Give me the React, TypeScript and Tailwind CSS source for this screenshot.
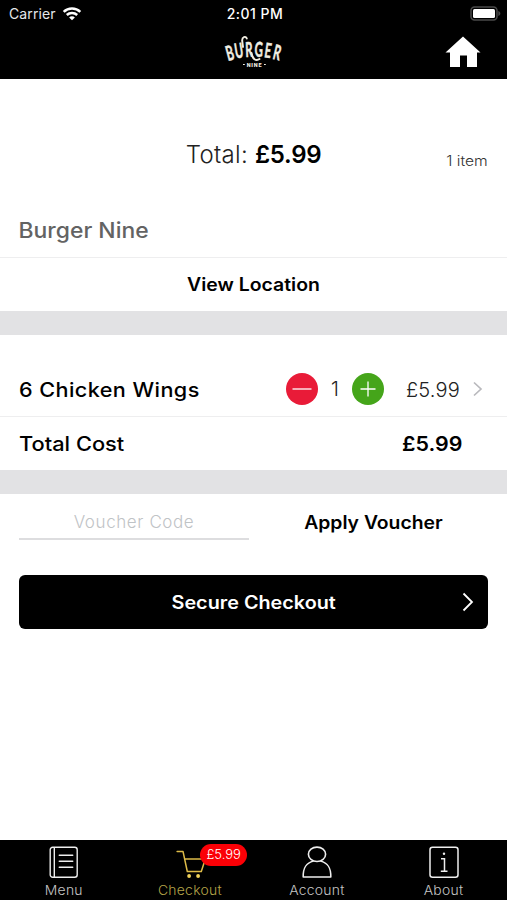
import React from 'react';
import clsx from 'clsx';

const ITEM = { name: '6 Chicken Wings', quantity: 1, price: '£5.99' };

const LOGO_LETTERS = [
    { char: 'B', x: 231.6, y: 61, angle: -15 },
    { char: 'U', x: 240, y: 58.8, angle: -9 },
    { char: 'R', x: 249.3, y: 57.8, angle: -2 },
    { char: 'G', x: 258.5, y: 57.8, angle: 3 },
    { char: 'E', x: 267, y: 58.8, angle: 8 },
    { char: 'R', x: 275.6, y: 60.5, angle: 13 },
];

const WifiIcon = () => (
    <svg width="20" height="16" viewBox="0 0 20 16" fill="none" stroke="#fff" strokeWidth="2.5">
        <path d="M1.7 5.8C6.3 1.3 13.7 1.3 18.3 5.8" />
        <path d="M4.8 9C7.7 6.2 12.3 6.2 15.2 9" />
        <path d="M7.1 11.4C8.7 9.9 11.3 9.9 12.9 11.4L10 14.3Z" fill="#fff" stroke="none" />
    </svg>
);

const BatteryIcon = () => (
    <svg width="31" height="15" viewBox="0 0 31 15">
        <rect x="1" y="1" width="26" height="13" rx="3.5" fill="#000" stroke="#4a4a4a" strokeWidth="1.5" />
        <rect x="3" y="3" width="22" height="9" rx="1.5" fill="#fff" />
        <path d="M28.3 5v5c1.6-.7 2-1.5 2-2.5s-.4-1.8-2-2.5Z" fill="#4a4a4a" />
    </svg>
);

const BurgerLogo = () => (
    <svg width="62" height="36" viewBox="223 35 62 36" fill="#f1eee2">
        {LOGO_LETTERS.map((letter, index) => (
            <text
                key={index}
                transform={`translate(${letter.x} ${letter.y}) rotate(${letter.angle}) scale(0.56 1)`}
                textAnchor="middle"
                stroke="#f1eee2"
                strokeWidth="0.5"
                className="font-['Lato'] text-[20.5px] font-bold"
            >
                {letter.char}
            </text>
        ))}
        {/* Swashes over the U and under the first R */}
        <path
            d="M243 48L242.2 42C241.8 37.5 245.8 36.8 246.8 39.5M251.5 54C252.3 60 256 62.4 259.5 60"
            fill="none"
            stroke="#f1eee2"
            strokeWidth="1.9"
            strokeLinecap="round"
        />
        <text x="254.5" y="67.6" textAnchor="middle" className="font-['Roboto'] text-[5.5px] font-black tracking-[0.8px]">
            NINE
        </text>
        <path d="M243 65.5h1.8M264 65.5h1.8" stroke="#f1eee2" strokeWidth="1" />
    </svg>
);

const HomeIcon = () => (
    <svg width="36" height="32" viewBox="0 0 36 32" fill="#fff">
        <path d="M18 .5L35.5 16.5H32V31H22V19.5H15V31H5V16.5H.5Z" />
    </svg>
);

const MenuIcon = () => (
    <svg width="30" height="33" viewBox="-1 0 30 33" fill="none" stroke="#eee" strokeWidth="1.4">
        <rect x="1.2" y="1.2" width="27" height="30" rx="2.5" />
        <path d="M5.3 1.2v30" />
        <path d="M10.3 9.2h13.4M10.3 15.2h13.4M10.3 21.3h13.4" strokeWidth="1.5" strokeLinecap="round" />
    </svg>
);

const CartIcon = () => (
    <svg width="30" height="33" viewBox="-0.8 0 30 33" fill="none" stroke="#ddbb48" strokeWidth="1.5">
        <path d="M1.3 5.4H7.2L11.5 25.5H25.5L29.5 13H8.8" strokeLinejoin="round" strokeLinecap="round" />
        <circle cx="13.3" cy="30" r="1.9" fill="#f0d158" stroke="none" />
        <circle cx="22.3" cy="30" r="1.9" fill="#f0d158" stroke="none" />
    </svg>
);

const AccountIcon = () => (
    <svg width="30" height="33" viewBox="0 0 30 33" fill="none" stroke="#eee" strokeWidth="1.6">
        <ellipse cx="15" cy="8.3" rx="8.6" ry="7.2" />
        <path d="M11.5 15C4 17 1 21.5 1.2 31H28.8C29 21.5 26 17 18.5 15" strokeLinejoin="round" />
    </svg>
);

const AboutIcon = () => (
    <svg width="30" height="33" viewBox="0 0 30 33" fill="none" stroke="#eee" strokeWidth="1.5">
        <rect x="1" y="1.2" width="28" height="30" rx="2.5" />
        <path d="M12 12.7H15.5V25.3M11.8 25.3H18.5" strokeWidth="1.5" />
        <circle cx="15" cy="7.7" r="1.2" fill="#eee" stroke="none" />
    </svg>
);

const TABS = [
    { label: 'Menu', icon: <MenuIcon /> },
    { label: 'Checkout', icon: <CartIcon />, badge: '£5.99', active: true },
    { label: 'Account', icon: <AccountIcon /> },
    { label: 'About', icon: <AboutIcon /> },
];

const Header = () => (
    <header className="h-[79px] shrink-0 bg-black text-white">
        <div className="grid h-[27px] grid-cols-3 items-center pl-[9px] pr-[6px]">
            <div className="flex items-center gap-[6px]">
                <span className="text-[14px] tracking-[0.1px] text-gray-200">Carrier</span>
                <WifiIcon />
            </div>
            <span className="text-center text-[14px] font-medium tracking-[0.5px]">2:01 PM</span>
            <div className="flex justify-end">
                <BatteryIcon />
            </div>
        </div>
        <div className="grid grid-cols-3 items-center pl-[27px] pr-[26px] pt-[7px]">
            <span />
            <div className="flex justify-center">
                <BurgerLogo />
            </div>
            <button className="flex justify-end" aria-label="Home">
                <HomeIcon />
            </button>
        </div>
    </header>
);

const Divider = () => <div className="h-[24px] shrink-0 bg-[#e2e2e4]" />;

const TabBar = () => (
    <nav className="grid h-[60px] shrink-0 grid-cols-4 bg-black">
        {TABS.map((tab) => (
            <button key={tab.label} className="flex flex-col items-center pt-[6px]">
                <span className="relative">
                    {tab.icon}
                    {tab.badge && (
                        <span className="absolute left-[25px] top-[-2px] flex h-[22px] w-[47px] items-center justify-center rounded-full bg-[#fb0006] text-[13px] font-light text-white">
                            {tab.badge}
                        </span>
                    )}
                </span>
                <span
                    className={clsx(
                        'mt-[2px] scale-x-[1.07] text-[13px] font-light leading-[18px] tracking-[0.25px]',
                        tab.active ? 'text-[#b5a448]' : 'text-[#c4c4c4]'
                    )}
                >
                    {tab.label}
                </span>
            </button>
        ))}
    </nav>
);

export default function App() {
    return (
        <div className="flex h-[900px] w-[507px] flex-col overflow-hidden bg-white font-['Inter','Liberation_Sans',sans-serif] text-black">
            <Header />

            <main className="flex flex-1 flex-col">
                <section className="grid h-[125px] grid-cols-[1fr_auto_1fr] items-center px-[19px] pt-[27px]">
                    <span />
                    <h1 className="text-[24px] font-light">
                        <span className="tracking-[0.3px] text-[#222]">Total: </span>
                        <b className="font-semibold tracking-[-0.3px]">{ITEM.price}</b>
                    </h1>
                    <span className="origin-right scale-x-[1.08] pt-[12px] text-right text-[14.5px] font-light text-[#333]">1 item</span>
                </section>

                <h2 className="flex h-[53px] origin-left scale-x-[1.09] items-center pl-[17px] text-[21px] font-medium text-[#636363]">
                    Burger Nine
                </h2>
                <button className="h-[54px] border-t border-[#eeeeef] text-[18px] font-semibold">
                    <span className="inline-block scale-x-[1.08]">View Location</span>
                </button>

                <Divider />

                <div className="flex h-[82px] items-center border-b border-[#eeeeef] pl-[19px] pr-[24px] pt-[27px]">
                    <span className="flex-1 origin-left scale-x-[1.08] pt-[2px] text-[20px] font-medium tracking-[0.4px]">{ITEM.name}</span>
                    <button className="flex size-8 items-center justify-center rounded-full bg-[#e91b38]" aria-label="Remove one">
                        <svg width="20" height="20" stroke="#fff" strokeWidth="1.3">
                            <path d="M.5 10h19" />
                        </svg>
                    </button>
                    <span className="w-[34px] text-center text-[20px] font-light text-[#222]">{ITEM.quantity}</span>
                    <button className="flex size-8 items-center justify-center rounded-full bg-[#45a51a]" aria-label="Add one">
                        <svg width="20" height="20" stroke="#fff" strokeWidth="1.3">
                            <path d="M2.5 10h15M10 2.5v15" />
                        </svg>
                    </button>
                    <span className="ml-[22px] w-[55px] pt-px text-[20px] font-light tracking-[0.2px] text-[#222]">{ITEM.price}</span>
                    <svg className="ml-[12px]" width="10" height="16" fill="none" stroke="#b9b9bd" strokeWidth="1.7">
                        <path d="M1 1.5L8 8L1 14.5" />
                    </svg>
                </div>
                <div className="flex h-[53px] items-center justify-between pl-[19px] pr-[45px] text-[20px]">
                    <span className="origin-left scale-x-[1.09] font-medium">Total Cost</span>
                    <span className="origin-right scale-x-[1.07] font-semibold">{ITEM.price}</span>
                </div>

                <Divider />

                <div className="flex h-[46px] px-[19px]">
                    <input
                        className="w-[230px] border-b-2 border-[#dddddf] pt-[13px] text-center text-[17px] font-light tracking-[0.6px] outline-none placeholder:text-[#bfc3c6]"
                        placeholder="Voucher Code"
                    />
                    <button className="ml-[9px] flex-1 pt-[10px] text-[18px] font-semibold">
                        <span className="inline-block scale-x-[1.075]">Apply Voucher</span>
                    </button>
                </div>

                <button className="relative mx-[19px] mt-[35px] h-[54px] rounded-[6px] bg-black pt-px text-[18px] font-semibold text-white">
                    <span className="inline-block scale-x-110">Secure Checkout</span>
                    <svg className="absolute right-[14px] top-[17px]" width="12" height="20" fill="none" stroke="#fff" strokeWidth="1.8">
                        <path d="M1.5 1.5L10 10L1.5 18.5" />
                    </svg>
                </button>
            </main>

            <TabBar />
        </div>
    );
}
